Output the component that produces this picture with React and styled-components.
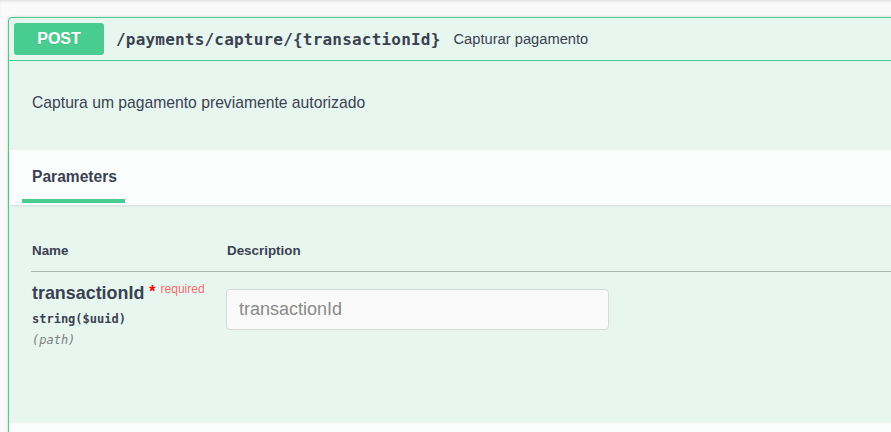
import styled, { createGlobalStyle } from "styled-components";

const GlobalStyle = createGlobalStyle`
    html, body {
        margin: 0;
        padding: 0;
        background: #fafafa;
        overflow: hidden;
        font-family: "Liberation Sans", Arial, sans-serif;
        color: #3b4151;
    }
`;

const App = () => {
    return (
        <>
            <GlobalStyle />
            <Page>
                <TopShadow />
                <Block>
                    <Summary>
                        <Method>POST</Method>
                        <Path>/payments/capture/{"{transactionId}"}</Path>
                        <SummaryText>Capturar pagamento</SummaryText>
                    </Summary>

                    <Description>Captura um pagamento previamente autorizado</Description>

                    <SectionHeader>
                        <Tab>Parameters</Tab>
                    </SectionHeader>

                    <TableArea>
                        <HeadRow>
                            <HeadCell>Name</HeadCell>
                            <HeadCell>Description</HeadCell>
                        </HeadRow>

                        <ParamRow>
                            <NameCell>
                                <ParamName>
                                    transactionId
                                    <Star>*</Star>
                                    <Required>required</Required>
                                </ParamName>
                                <ParamType>string($uuid)</ParamType>
                                <ParamIn>(path)</ParamIn>
                            </NameCell>
                            <div>
                                <Input placeholder="transactionId" />
                            </div>
                        </ParamRow>
                    </TableArea>

                    <NextHeader />
                </Block>
            </Page>
        </>
    );
}

export default App;

const Page = styled.div`
    width: 1000px;
    height: 432px;
    overflow: hidden;
`;

const TopShadow = styled.div`
    height: 17px;
    background: #fafafa;
    box-shadow: inset 0 2px 3px -1px rgba(0, 0, 0, 0.12);
`;

const Block = styled.div`
    margin: 0 0 0 8px;
    border: 1px solid #49cc90;
    border-radius: 4px;
    background: #e8f6f0;
    box-shadow: 0 0 3px rgba(0, 0, 0, 0.19);
`;

const Summary = styled.div`
    display: flex;
    align-items: center;
    padding: 5px;
    border-bottom: 1px solid #49cc90;
`;

const Method = styled.div`
    width: 90px;
    height: 32px;
    display: flex;
    align-items: center;
    justify-content: center;
    background: #49cc90;
    border-radius: 3px;
    color: #fff;
    font-size: 16px;
    font-weight: 700;
    text-shadow: 0 1px 0 rgba(0, 0, 0, 0.1);
`;

const Path = styled.span`
    padding: 0 13px 0 12px;
    font-family: "DejaVu Sans Mono", "Liberation Mono", monospace;
    font-size: 16px;
    font-weight: 700;
    letter-spacing: 0.2px;
    color: #3b4151;
`;

const SummaryText = styled.span`
    font-size: 14.7px;
    color: #3b4151;
`;

const Description = styled.div`
    height: 89px;
    box-sizing: border-box;
    padding: 33px 23px 0;
    font-size: 15.7px;
    line-height: 18px;
    color: #3b4151;
`;

const SectionHeader = styled.div`
    height: 55px;
    display: flex;
    align-items: flex-end;
    padding: 0 0 0 13px;
    background: rgba(255, 255, 255, 0.8);
    box-shadow: 0 1px 2px rgba(0, 0, 0, 0.1);
`;

const Tab = styled.div`
    padding: 0 10px 12px;
    width: 83px;
    font-size: 15.6px;
    font-weight: 700;
    line-height: 20px;
    border-bottom: 4px solid #49cc90;
    margin-bottom: 2px;
`;

const TableArea = styled.div`
    height: 218px;
    padding: 37px 0 0 22px;
    box-sizing: border-box;
`;

const HeadRow = styled.div`
    display: grid;
    grid-template-columns: 195px 1fr;
    padding: 0 1px 11px;
    border-bottom: 1px solid #a9bab2;
`;

const HeadCell = styled.div`
    font-size: 13.4px;
    font-weight: 700;
    line-height: 18px;
`;

const ParamRow = styled.div`
    display: grid;
    grid-template-columns: 194px 1fr;
    padding: 10px 1px 0;
`;

const NameCell = styled.div`
    display: flex;
    flex-direction: column;
`;

const ParamName = styled.div`
    font-size: 17.9px;
    font-weight: 700;
    line-height: 22px;
    white-space: nowrap;
`;

const Star = styled.span`
    color: red;
    font-size: 16px;
    margin-left: 5px;
    position: relative;
    top: -2px;
`;

const Required = styled.span`
    color: rgba(255, 0, 0, 0.6);
    font-size: 12px;
    margin-left: 5px;
    position: relative;
    top: -6px;
    font-weight: 400;
`;

const ParamType = styled.div`
    font-family: "DejaVu Sans Mono", "Liberation Mono", monospace;
    font-size: 12px;
    font-weight: 600;
    line-height: 20px;
    margin-top: 3px;
`;

const ParamIn = styled.div`
    font-family: "DejaVu Sans Mono", "Liberation Mono", monospace;
    font-size: 12px;
    font-style: italic;
    color: #808080;
    line-height: 20px;
    margin-top: 1px;
`;

const Input = styled.input`
    width: 383px;
    height: 41px;
    box-sizing: border-box;
    margin-top: 7px;
    padding: 0 12px;
    border: 1px solid #d9d9d9;
    border-radius: 4px;
    background: #fafafa;
    font-family: "Liberation Sans", Arial, sans-serif;
    font-size: 18px;
    color: #3b4151;
    outline: none;

    &::placeholder {
        color: #8a8a8a;
    }
`;

const NextHeader = styled.div`
    height: 40px;
    background: rgba(255, 255, 255, 0.8);
`;
